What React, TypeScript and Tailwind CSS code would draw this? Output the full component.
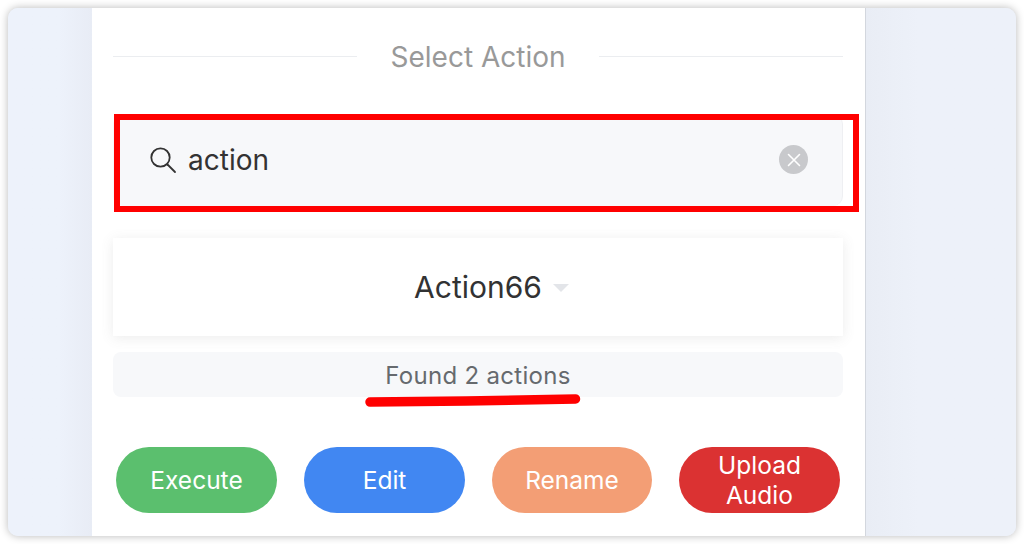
import React from "react";

function Btn({ label, cls }: { label: React.ReactNode; cls: string }) {
  return (
    <div className={`h-[66px] rounded-[33px] flex items-center justify-center text-center text-white text-[24.5px] leading-[30px] ${cls}`}>
      {label}
    </div>
  );
}

export default function App() {
  return (
    <div className="w-[1024px] h-[544px] bg-white p-2 overflow-hidden font-['Inter',sans-serif]">
      <div className="w-[1008px] h-[528px] rounded-[10px] overflow-hidden flex shadow-[0_0_8px_rgba(0,0,0,0.28)] bg-[#edf1f9]">
        <div className="w-[84px] bg-gradient-to-r from-[#edf2fb] from-60% to-[#e8ecf5]" />
        <div className="w-[774px] bg-white border-r border-[#d3d7de] pl-[21px] pr-[22px] relative flex flex-col">
          <div className="h-[98px] pt-[30px] flex items-start">
            <div className="flex-1 h-px bg-[#ebedf0] mt-[18px]" />
            <div className="w-[242px] text-center text-[#999999] text-[28px] leading-[38px]">Select Action</div>
            <div className="flex-1 h-px bg-[#ebedf0] mt-[18px]" />
          </div>
          <div className="h-[100px] w-[730px] pt-[8px]">
            <div className="h-[92px] rounded-[10px] bg-[#f7f8fa] border-r border-[#eeeff2] flex items-center pl-[36px] pr-[34px]">
              <svg width="28" height="28" viewBox="0 0 28 28" fill="none" stroke="#333333" strokeWidth="1.8" strokeLinecap="round" className="shrink-0">
                <circle cx="11.5" cy="11.5" r="9.2" />
                <path d="M18.5 18.500 L26 26" />
              </svg>
              <div className="ml-[11px] flex-1 text-[#333333] text-[28px] leading-[36px]">action</div>
              <div className="w-[29px] h-[29px] -mt-px rounded-full bg-[#c8c9cc] flex items-center justify-center">
                <svg width="14" height="14" viewBox="0 0 14 14" fill="none" stroke="#ffffff" strokeWidth="1.6" strokeLinecap="round">
                  <path d="M1.5 1.5 L12.5 12.500 M12.5 1.500 L1.5 12.500" />
                </svg>
              </div>
            </div>
          </div>
          <div className="mt-[32px] h-[98px] w-[730px] bg-white shadow-[0_2px_12px_rgba(100,101,102,0.12)] flex items-center justify-center text-[#323233] text-[30px]">
            <span className="relative">
              Action66
              <span className="absolute left-[calc(100%+11px)] top-[19px] w-0 h-0 border-l-[8px] border-r-[8px] border-t-[8px] border-l-transparent border-r-transparent border-t-[#e3e5e9]" />
            </span>
          </div>
          <div className="mt-[16px] h-[45px] w-[730px] pt-[2px] rounded-[8px] bg-[#f7f8fa] flex items-center justify-center text-[#666a6e] text-[24px] tracking-[0.3px]">
            Found 2 actions
          </div>
          <div className="mt-[50px] w-[730px] pl-[3px] flex gap-[27px]">
            <Btn label="Execute" cls="w-[161px] bg-[#5bbf6e]" />
            <Btn label="Edit" cls="w-[161px] bg-[#4187f2]" />
            <Btn label="Rename" cls="w-[160px] bg-[#f39e75]" />
            <Btn label={<>Upload<br />Audio</>} cls="w-[161px] bg-[#db3232]" />
          </div>
          <div className="absolute left-[22px] top-[106px] w-[745px] h-[98px] border-[6px] border-[#ff0000]" />
          <svg className="absolute left-[272px] top-[384px]" width="218" height="16" viewBox="0 0 218 16" fill="none">
            <path d="M6 10 C70 9.500 150 8.500 211.500 7" stroke="#ff0000" strokeWidth="9.500" strokeLinecap="round" />
          </svg>
        </div>
        <div className="flex-1 bg-gradient-to-r from-[#e9edf5] to-[#edf1f9] to-[35%]" />
      </div>
    </div>
  );
}
